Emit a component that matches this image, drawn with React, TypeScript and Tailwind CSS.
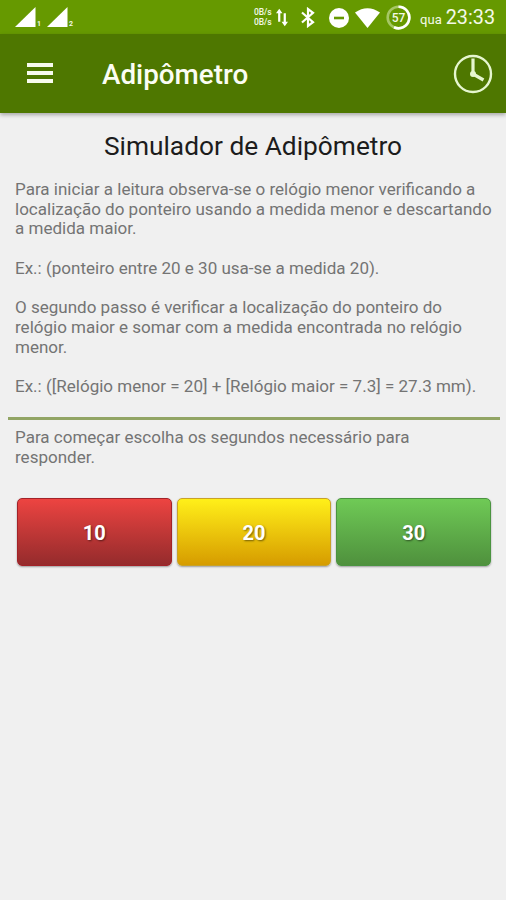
import { ReactNode } from "react";

type timeButton = {
  seconds: number;
  className: string;
};

const buttons: timeButton[] = [
  {
    seconds: 10,
    className: "border-[#a32228] bg-linear-to-b from-[#ed4441] to-[#952b2c]",
  },
  {
    seconds: 20,
    className: "border-[#c9a227] bg-linear-to-b from-[#fff019] to-[#d69c00]",
  },
  {
    seconds: 30,
    className: "border-[#4b9440] bg-linear-to-b from-[#6fca56] to-[#4f913d]",
  },
];

const Signal = ({ sim }: { sim: string }) => (
  <div className="flex items-end">
    <svg width="21" height="20" viewBox="0 0 21 20" fill="#fff">
      <path d="M0 20 20.5 0V20Z" />
    </svg>
    <span className="ml-[1px] w-[10px] text-[7px] leading-[6px] font-bold">
      {sim}
    </span>
  </div>
);

const StatusBar = () => (
  <div className="flex h-[34px] items-start bg-[#669900] text-[#f4f9e8]">
    <div className="flex pt-[7px] pl-[15px]">
      <Signal sim="1" />
      <Signal sim="2" />
    </div>
    <div className="ml-auto flex h-[34px] items-center pt-[1px] pr-[11px]">
      <div className="w-[21px] text-[8.5px] leading-[9.5px] font-medium tracking-[-0.1px]">
        <div>0B/s</div>
        <div>0B/s</div>
      </div>
      <svg
        className="ml-[1px]"
        width="12"
        height="19"
        viewBox="0 0 13 19"
        fill="#fff"
      >
        <path d="M3.5 0 7 5H4.7v9H2.3V5H0Z" />
        <path d="M9.5 19 6 14h2.3V5h2.4v9H13Z" />
      </svg>
      <svg
        className="ml-[13px]"
        width="14"
        height="21"
        viewBox="0 0 14 21"
        fill="none"
        stroke="#fff"
        strokeWidth="2.2"
      >
        <path d="M1 5.5 12 15.2 7 19V2L12 5.8 1 15.5" />
      </svg>
      <svg className="ml-[14px]" width="20" height="20" viewBox="0 0 20 20">
        <circle cx="10" cy="10" r="10" fill="#fff" />
        <path d="M5 10h10" stroke="#669900" strokeWidth="2.6" />
      </svg>
      <svg
        className="ml-[6px]"
        width="25"
        height="20"
        viewBox="0 0 25 20"
        fill="#fff"
      >
        <path d="M0 4.5Q12.5-4 25 4.5L12.5 20Z" />
      </svg>
      <div className="relative ml-[6px] flex h-[25px] w-[25px] items-center justify-center">
        <svg
          className="absolute inset-0"
          width="25"
          height="25"
          viewBox="0 0 25 25"
          fill="none"
          strokeWidth="2.6"
        >
          <circle cx="12.5" cy="12.5" r="10.8" stroke="#a6c765" />
          <path d="M12.5 1.7A10.8 10.8 0 1 1 8 22.3" stroke="#fff" />
        </svg>
        <span className="relative text-[12px] leading-none font-medium">
          57
        </span>
      </div>
      <div className="ml-[9px] flex items-baseline pt-[1px]">
        <span className="text-[13px] leading-none">qua</span>
        <span className="ml-[4px] text-[19.8px] leading-none">23:33</span>
      </div>
    </div>
  </div>
);

const Toolbar = () => (
  <header className="flex h-[79px] items-center bg-[#4e7700] pr-[13px] pl-[27px] text-[#fbfdf3] shadow-[0_2px_4px_rgba(0,0,0,0.3)]">
    <div className="flex flex-col gap-[4px] pb-[1px]">
      <div className="h-[4px] w-[26px] bg-[#f8fbee]" />
      <div className="h-[4px] w-[26px] bg-[#f8fbee]" />
      <div className="h-[4px] w-[26px] bg-[#f8fbee]" />
    </div>
    <h1 className="ml-[49px] pt-[2px] text-[27.8px] leading-none font-medium whitespace-nowrap">
      Adipômetro
    </h1>
    <svg
      className="ml-auto"
      width="40"
      height="40"
      viewBox="0 0 40 40"
      fill="none"
      stroke="#e6f6cf"
    >
      <circle cx="20" cy="20" r="18" strokeWidth="2.4" />
      <path d="M20 4.5V20L30.5 26" strokeWidth="3.2" />
      <circle cx="20" cy="20" r="3" fill="#e6f6cf" stroke="none" />
    </svg>
  </header>
);

const Text = ({ children }: { children: ReactNode }) => (
  <p className="text-[17.03px] leading-[19.7px] whitespace-nowrap text-[#747474]">
    {children}
  </p>
);

const App = () => {
  return (
    <div className="h-[900px] w-[506px] overflow-hidden bg-[#f0f0f0] font-[Roboto,sans-serif]">
      <StatusBar />
      <Toolbar />
      <main>
        <h2 className="pt-[17px] text-center text-[26.3px] leading-[32px] text-[#1c1c1c]">
          Simulador de Adipômetro
        </h2>
        <div className="flex flex-col gap-[19.7px] pt-[18px] pl-[15px]">
          <Text>
            Para iniciar a leitura observa-se o relógio menor verificando a
            <br />
            localização do ponteiro usando a medida menor e descartando
            <br />a medida maior.
          </Text>
          <Text>Ex.: (ponteiro entre 20 e 30 usa-se a medida 20).</Text>
          <Text>
            O segundo passo é verificar a localização do ponteiro do
            <br />
            relógio maior e somar com a medida encontrada no relógio
            <br />
            menor.
          </Text>
          <Text>Ex.: ([Relógio menor = 20] + [Relógio maior = 7.3] = 27.3 mm).</Text>
        </div>
        <div className="mr-[6px] mt-[20px] mb-[8.5px] ml-[8px] h-[3px] bg-[#92a565]" />
        <div className="pl-[15px]">
          <Text>
            Para começar escolha os segundos necessário para
            <br />
            responder.
          </Text>
        </div>
        <div className="mt-[30.5px] grid grid-cols-3 gap-[5px] pr-[15px] pl-[17px]">
          {buttons.map((button) => (
            <button
              key={button.seconds}
              type="button"
              className={`h-[68px] rounded-[5px] border-[1.5px] pt-[2px] text-[20px] font-bold text-white shadow-[0_1px_2px_rgba(0,0,0,0.35)] text-shadow-[1px_1px_2px_rgba(0,0,0,0.5)] ${button.className}`}
            >
              {button.seconds}
            </button>
          ))}
        </div>
      </main>
    </div>
  );
};

export default App;
